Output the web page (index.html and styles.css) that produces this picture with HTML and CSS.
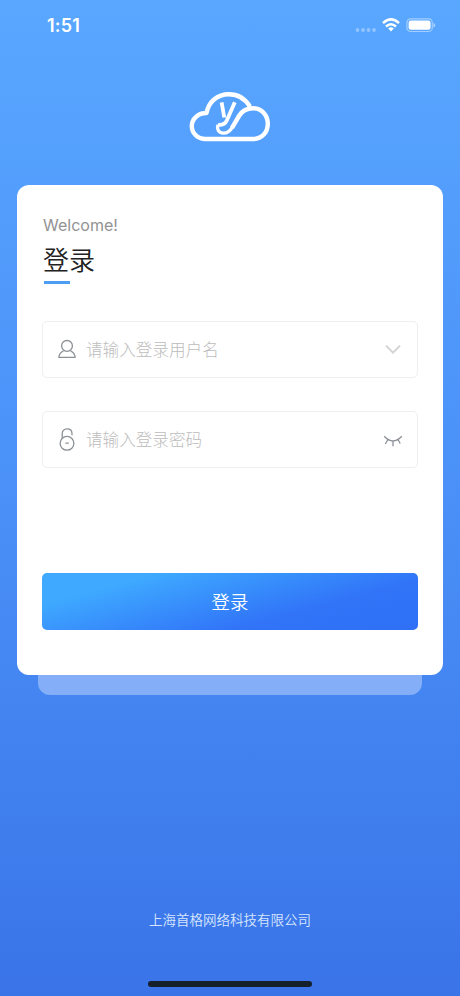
FILE: index.html
```html
<!DOCTYPE html>
<html lang="zh-CN">
<head>
<meta charset="utf-8">
<title>登录</title>
<link rel="stylesheet" href="styles.css">
</head>
<body>
<header class="status">
  <span class="time">1:51</span>
  <div class="indicators">
    <svg class="dots" width="22" height="6" viewBox="0 0 22 6"><g fill="#fff" opacity=".35"><circle cx="2.5" cy="3" r="1.9"/><circle cx="8" cy="3" r="1.9"/><circle cx="13.5" cy="3" r="1.9"/><circle cx="19" cy="3" r="1.9"/></g></svg>
    <svg class="wifi" width="18" height="14" viewBox="0 0 18 14"><g fill="none" stroke="#fff" stroke-width="2.5"><path d="M1 5.1Q9-2.3 17 5.1"/><path d="M4 8.5Q9 4 14 8.5"/></g><path fill="#fff" d="M6.2 10.4Q9 8.2 11.8 10.4L9 13.4Z"/></svg>
    <svg class="battery" width="30" height="15" viewBox="0 0 30 15"><rect x=".9" y=".9" width="25.4" height="12.6" rx="3.8" fill="none" stroke="#fff" stroke-width="1.2" opacity=".45"/><rect x="2.6" y="2.6" width="22" height="9.2" rx="2.3" fill="#fff"/><path d="M27.5 5Q29.3 5.5 29.3 7.2T27.5 9.4Z" fill="#fff" opacity=".5"/></svg>
  </div>
</header>
<div class="brand">
  <svg width="100" height="75" viewBox="0 0 100 75" fill="none" stroke="#fff" stroke-width="4.4" stroke-linejoin="round">
    <path d="M70 26.5C65 18.5 58 14.2 49 14.2C37 14.2 28.6 22 26.5 33C18 33 11.8 38.8 11.8 46C11.8 53.2 17.5 59 25.5 59H73C82 59 87.8 52.3 87.8 43.7C87.8 35 81.5 28.3 73 28.3C66.5 28.3 62 31 59 36L52 47.8"/>
    <path stroke-width="3.4" d="M52.3 47.3C49.8 51.4 47 53.2 43.3 53.1C38.5 53 36.6 49 38 44.8"/>
    <path stroke-width="3.8" d="M41.6 22.3L44.3 37.5M54.8 22.3L46.8 40.4C45.2 43.9 43 45.2 38 44.8"/>
  </svg>
</div>
<main class="panel">
  <form class="card">
    <p class="welcome">Welcome!</p>
    <h1>登录</h1>
    <div class="rule"></div>
    <div class="field">
      <svg width="20" height="24" viewBox="0 0 20 24" fill="none" stroke="#8c9096" stroke-width="1.3"><circle cx="10" cy="7.9" r="5.4"/><path d="M6.5 12.8C3.8 14 2.2 16.1 1.8 19.3H18.2C17.8 16.1 16.2 14 13.5 12.8" stroke-linejoin="round"/></svg>
      <span class="hint">请输入登录用户名</span>
      <svg width="20" height="24" viewBox="0 0 20 24" fill="none" stroke="#d2d3d5" stroke-width="2"><path d="M3 7.6L10 14.6L17 7.6"/></svg>
    </div>
    <div class="field">
      <svg width="20" height="24" viewBox="0 0 20 24" fill="none" stroke="#8c9096" stroke-width="1.3"><circle cx="10" cy="15.3" r="6.9"/><path d="M5.2 10.1V5.7C5.2 2.8 7.1 .9 10 .9S15 2.8 15 5.7V7.3M8.4 15.2H11.8"/></svg>
      <span class="hint">请输入登录密码</span>
      <svg width="20" height="24" viewBox="0 0 20 24" fill="none" stroke="#8c9096" stroke-width="1.3"><path d="M1.2 8.3Q10 17.7 18.8 8.3M5 11.5L2.3 16M10 13.1V18.3M15 11.5L17.2 15.5"/></svg>
    </div>
    <button type="button">登录</button>
  </form>
  <div class="under"></div>
</main>
<footer>
  <p>上海首格网络科技有限公司</p>
  <div class="home"></div>
</footer>
</body>
</html>
```
FILE: styles.css
```css
* { box-sizing: border-box; margin: 0; }
body {
  height: 996px;
  display: flex;
  flex-direction: column;
  background: linear-gradient(180deg, #59a7ff 0%, #4a90f8 50%, #3a74e8 100%);
  font-family: Inter, "Noto Sans CJK SC", sans-serif;
}
svg { display: block; flex: none; }
.status {
  height: 80px;
  padding: 16px 24px 0 47px;
  display: flex;
  justify-content: space-between;
  align-items: flex-start;
  color: #fff;
}
.time { font-size: 18px; line-height: 20px; font-weight: 600; letter-spacing: 0.2px; }
.indicators { display: flex; align-items: flex-start; padding-top: 2px; }
.dots { margin-top: 9px; }
.wifi { margin: 0 6px 0 5px; }
.brand { height: 105px; display: flex; justify-content: center; }
.panel { padding: 0 17px; }
.card {
  height: 490px;
  padding: 30px 25px 0;
  background: #fff;
  border-radius: 12px;
}
.welcome { padding-left: 1px; font-size: 16px; line-height: 21px; color: #929292; }
h1 {
  margin-top: 6px;
  padding-left: 1px;
  font-size: 26px;
  line-height: 38px;
  font-weight: 350;
  color: #222;
}
.rule { width: 26px; height: 3px; margin: 1px 0 37px 2px; background: #4d9df2; }
.field {
  height: 57px;
  margin-bottom: 33px;
  padding: 0 14px;
  display: flex;
  align-items: center;
  border: 1px solid #eeeff0;
  border-radius: 5px;
}
.hint { flex: 1; margin-left: 9px; font-size: 16.6px; font-weight: 300; line-height: 24px; color: #bcbcbc; }
button {
  display: block;
  width: 100%;
  height: 57px;
  margin-top: 105px;
  border: 0;
  padding: 1px 0 0;
  border-radius: 5px;
  background: linear-gradient(165deg, #3ea9ff 20%, #3174f8 68%, #2f70f5 100%);
  color: #fff;
  font: 350 18.4px/56px Inter, "Noto Sans CJK SC", sans-serif;
}
.under { height: 20px; margin: 0 21px; border-radius: 0 0 12px 12px; background: #84aef7; }
footer { margin-top: auto; display: flex; flex-direction: column; align-items: center; }
footer p { font-size: 13.5px; line-height: 20px; font-weight: 350; color: #d8e6fd; }
.home { width: 164px; height: 6px; margin: 51px 0 9px; border-radius: 3px; background: #15202a; }
```
